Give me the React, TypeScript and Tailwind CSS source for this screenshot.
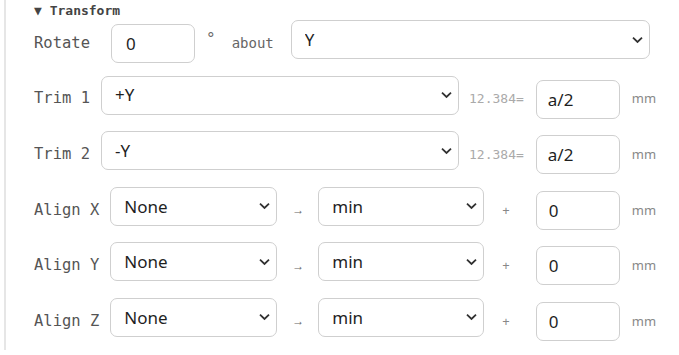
import { useState } from "react";

const mono = "font-['DejaVu_Sans_Mono',monospace]";
const sans = "font-['Noto_Sans',sans-serif]";

function Chevron() {
  return (
    <svg
      className="pointer-events-none absolute right-[7px] top-1/2 -translate-y-1/2"
      width="11"
      height="7"
      viewBox="0 0 11 7"
      fill="none"
    >
      <path d="M1 1.2 5.5 5.5 10 1.2" stroke="#333" strokeWidth="1.8" />
    </svg>
  );
}

function Select({
  value,
  options,
  className,
}: {
  value: string;
  options: string[];
  className: string;
}) {
  const [v, setV] = useState(value);
  return (
    <div className={`relative mb-[8px] shrink-0 ${className}`}>
      <select
        value={v}
        onChange={(e) => setV(e.target.value)}
        className={`${sans} h-[39px] w-full appearance-none rounded-[7px] border border-[#cfcfcf] bg-white pl-[13px] text-[17px] text-[#1f1f1f] outline-none`}
      >
        {options.map((o) => (
          <option key={o}>{o}</option>
        ))}
      </select>
      <Chevron />
    </div>
  );
}

function Field({ value, className = "" }: { value: string; className?: string }) {
  const [v, setV] = useState(value);
  return (
    <input
      value={v}
      onChange={(e) => setV(e.target.value)}
      className={`${sans} h-[39px] w-[84px] shrink-0 rounded-[7px] border border-[#cfcfcf] bg-white px-[12px] text-[17px] text-[#1f1f1f] outline-none ${className}`}
    />
  );
}

const axes = ["+X", "-X", "+Y", "-Y", "+Z", "-Z"];
const aligns = ["None", "X", "Y", "Z"];
const sides = ["min", "center", "max"];

function Label({ children }: { children: string }) {
  return (
    <span className={`${mono} shrink-0 text-[15.5px] text-[#555] whitespace-pre`}>
      {children}
    </span>
  );
}

function Unit() {
  return (
    <span className={`${sans} ml-[12px] text-[13px] text-[#888]`}>mm</span>
  );
}

export default function App() {
  return (
    <div className="h-[350px] w-[679px] bg-white">
      <div className="ml-[4px] h-full border-l-2 border-[#e6e6e6] pl-[28px] pt-[3px]">
        <div className={`${mono} h-[16px] text-[13px] leading-[16px] font-bold text-[#444]`}>
          ▼ Transform
        </div>

        <div className="mt-[5px] flex flex-col gap-[16.6px]">
          <div className="flex h-[39px] items-center">
            <Label>Rotate</Label>
            <Field value="0" className="ml-[21px] pl-[14px]" />
            <span className={`${mono} mb-[10px] ml-[11px] text-[16px] text-[#666]`}>°</span>
            <span className={`${mono} ml-[16px] text-[14px] text-[#666]`}>about</span>
            <Select value="Y" options={["X", "Y", "Z"]} className="ml-[17px] w-[359px]" />
          </div>

          {[
            ["Trim 1", "+Y"],
            ["Trim 2", "-Y"],
          ].map(([label, val]) => (
            <div key={label} className="flex h-[39px] items-center">
              <Label>{label}</Label>
              <Select value={val} options={axes} className="ml-[11px] w-[358px]" />
              <span className={`${mono} ml-[10px] text-[13px] text-[#aaa]`}>12.384=</span>
              <Field value="a/2" className="ml-[12px] pl-[11px]" />
              <Unit />
            </div>
          ))}

          {["Align X", "Align Y", "Align Z"].map((label) => (
            <div key={label} className="flex h-[39px] items-center">
              <Label>{label}</Label>
              <Select value="None" options={aligns} className="ml-[11px] w-[167px]" />
              <span className={`${sans} ml-[15px] text-[12px] text-[#666]`}>→</span>
              <Select value="min" options={sides} className="ml-[14px] w-[166px]" />
              <span className={`${sans} ml-[18px] text-[13px] text-[#888]`}>+</span>
              <Field value="0" className="ml-[26px]" />
              <Unit />
            </div>
          ))}
        </div>
      </div>
    </div>
  );
}
